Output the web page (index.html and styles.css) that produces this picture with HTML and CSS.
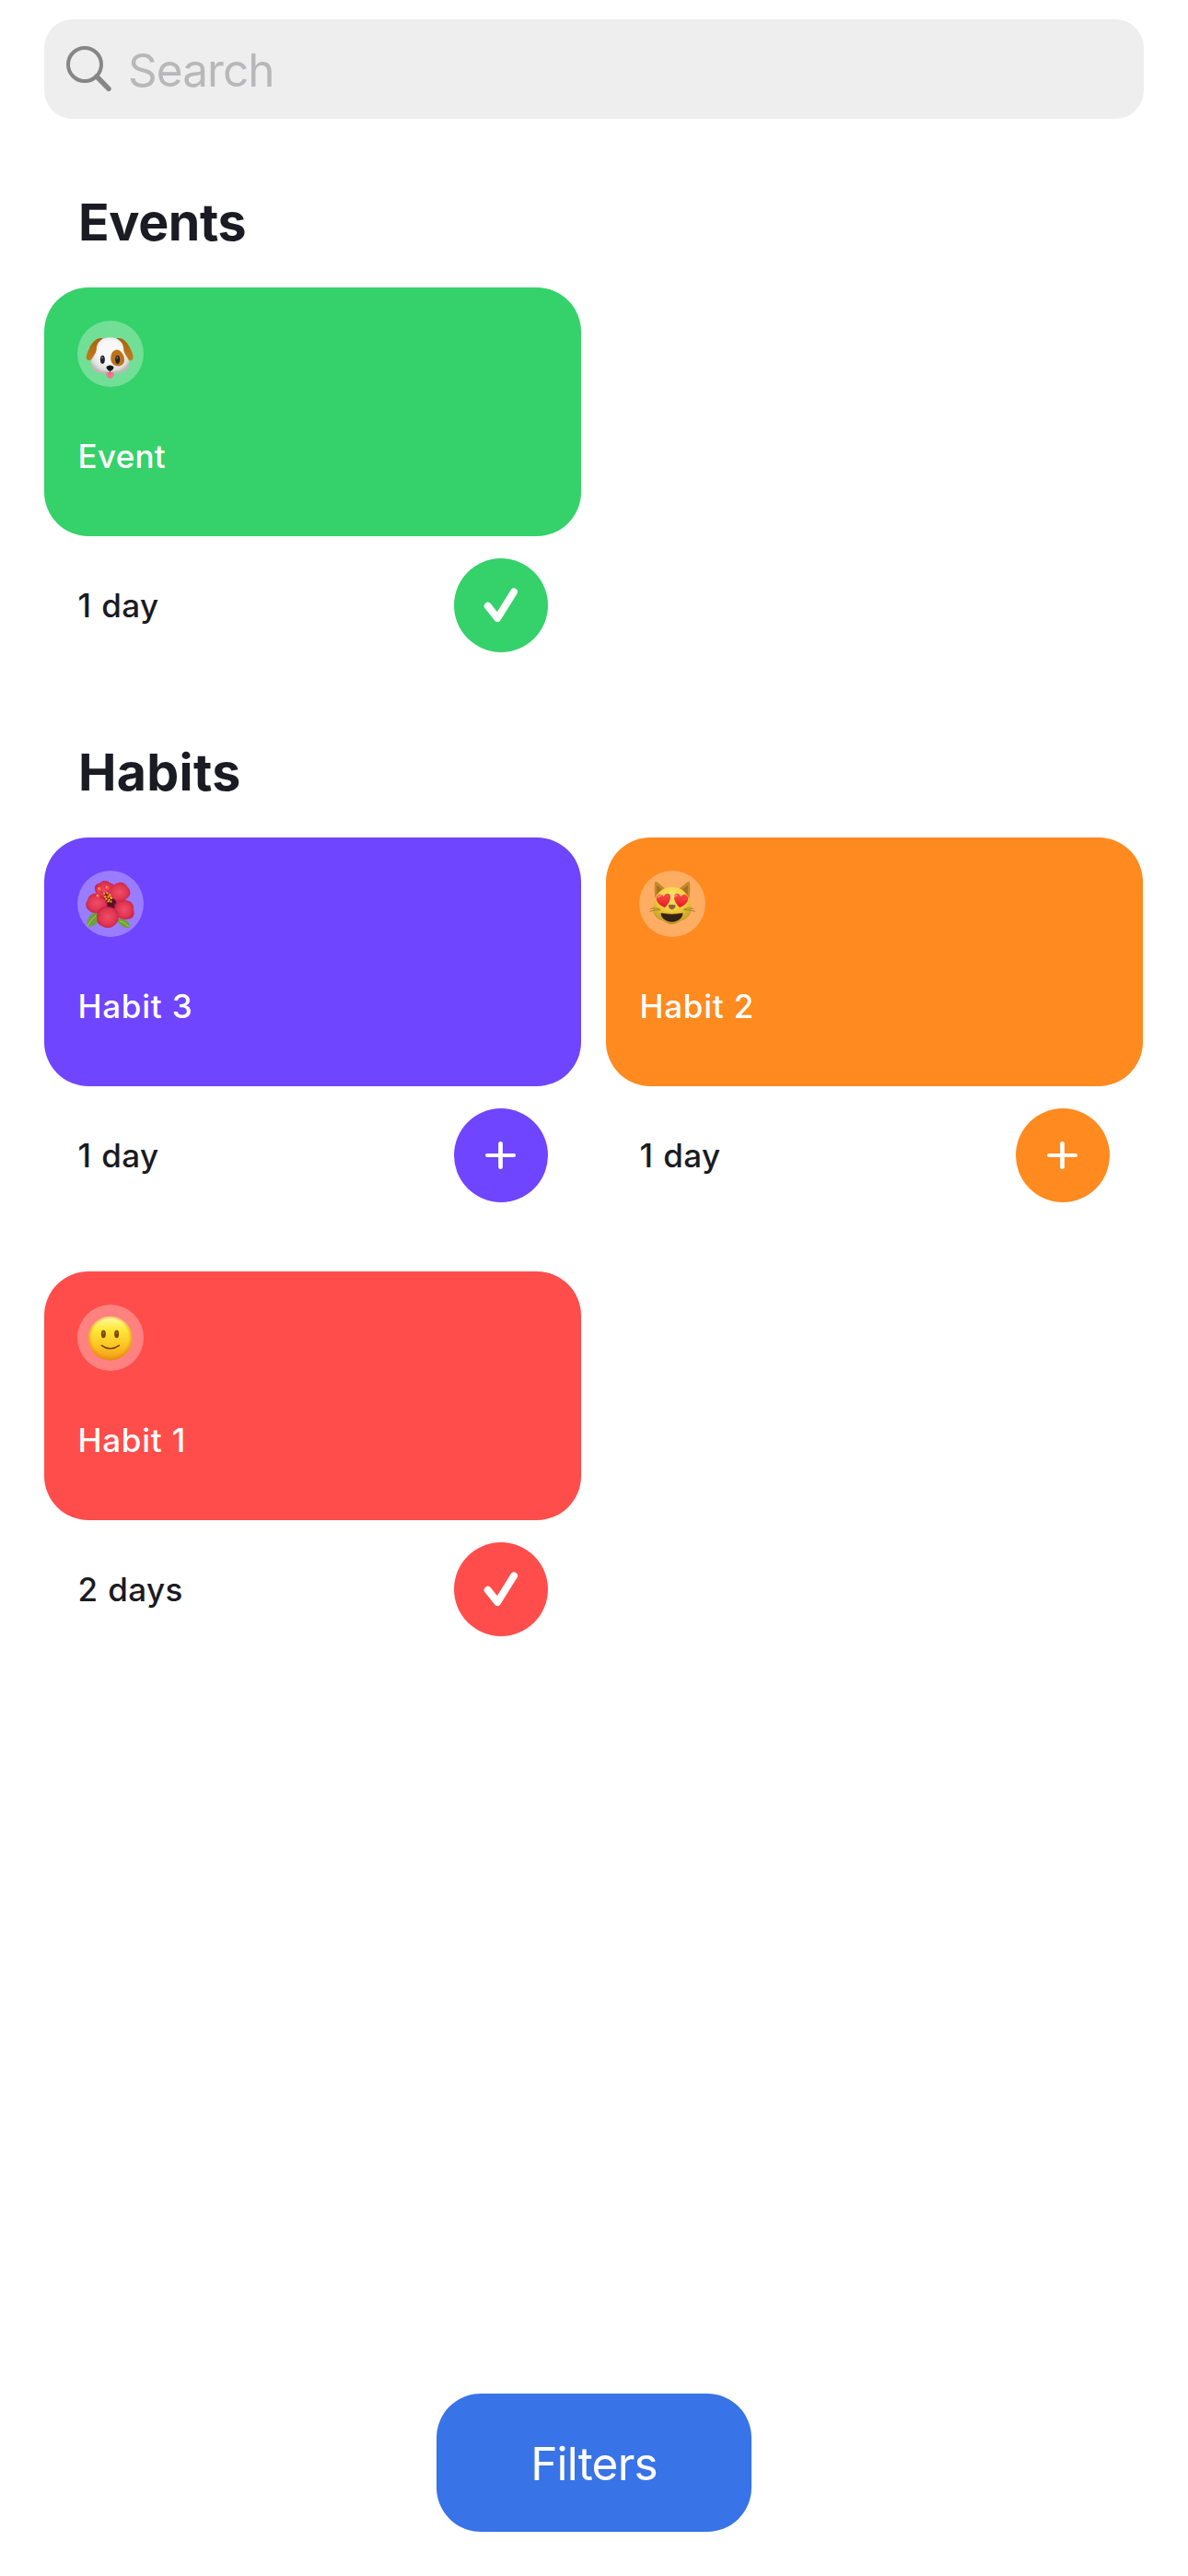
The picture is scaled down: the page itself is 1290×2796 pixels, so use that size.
FILE: index.html
```
<!DOCTYPE html>
<html lang="en">
<head>
<meta charset="utf-8">
<title>Habits</title>
<link rel="stylesheet" href="styles.css">
</head>
<body>
<svg class="defs" width="0" height="0" aria-hidden="true">
  <defs>
    <symbol id="check" viewBox="0 0 102 102"><path d="M36.7 51.8 47.2 65 65 36.5" fill="none" stroke="#fff" stroke-width="8" stroke-linecap="round" stroke-linejoin="round"/></symbol>
    <symbol id="plus" viewBox="0 0 102 102"><path d="M36 51H65" stroke="#fff" stroke-width="4" stroke-linecap="round"/><path d="M50.5 38.300V63.700" stroke="#fff" stroke-width="4.700" stroke-linecap="round"/></symbol>
    <radialGradient id="fur" cx=".5" cy=".4" r=".6"><stop offset=".5" stop-color="#f8f8f8"/><stop offset=".85" stop-color="#dededc"/><stop offset="1" stop-color="#b9bab5"/></radialGradient>
    <linearGradient id="ear" x1="0" y1="0" x2="0" y2="1"><stop offset="0" stop-color="#a9620c"/><stop offset="1" stop-color="#c57a1b"/></linearGradient>
    <radialGradient id="petal" cx=".5" cy=".5" r=".6"><stop offset="0" stop-color="#ef4d69"/><stop offset=".6" stop-color="#e03653"/><stop offset="1" stop-color="#b81c3c"/></radialGradient>
    <radialGradient id="cat" cx=".5" cy=".25" r=".75"><stop offset="0" stop-color="#ffe66a"/><stop offset=".55" stop-color="#efc93a"/><stop offset="1" stop-color="#bd9526"/></radialGradient>
    <linearGradient id="heart" x1="0" y1="0" x2="0" y2="1"><stop offset="0" stop-color="#ff5149"/><stop offset="1" stop-color="#e31a22"/></linearGradient>
    <linearGradient id="smile" x1="0" y1="0" x2="0" y2="1"><stop offset="0" stop-color="#fffaa8"/><stop offset=".3" stop-color="#fee83a"/><stop offset=".65" stop-color="#fdc524"/><stop offset="1" stop-color="#f49a17"/></linearGradient>
    <radialGradient id="rim" cx=".5" cy=".48" r=".52"><stop offset=".8" stop-color="#e58a10" stop-opacity="0"/><stop offset="1" stop-color="#dd8310" stop-opacity=".75"/></radialGradient>
  </defs>
</svg>
<main class="screen">
  <label class="search">
    <svg class="search-icon" viewBox="0 0 52 52"><circle cx="22" cy="22" r="18" fill="none" stroke="#868688" stroke-width="4"/><path d="M35 35 48 48.300" stroke="#868688" stroke-width="5.500" stroke-linecap="round"/></svg>
    <span class="placeholder">Search</span>
  </label>

  <section class="section">
    <h2 class="title title-events">Events</h2>
    <div class="grid">
      <article class="item green">
        <div class="card">
          <svg class="emoji" viewBox="0 0 72 72"><g transform="translate(-14 -13) scale(.33333)">
            <path d="M125 97C104 92 88 112 80 131c-6 14-12 26-7 34 8 11 22-4 29-17z" fill="url(#ear)"/>
            <path d="M170 97c21-5 37 15 45 34 6 14 12 26 7 34-8 11-22-4-29-17z" fill="url(#ear)"/>
            <path d="M148 94c-27 0-44 16-44 40 0 13-18 25-18 46 0 20 17 30 38 30 9 3 39 3 48 0 21 0 39-10 39-30 0-21-18-33-18-46 0-24-18-40-45-40z" fill="url(#fur)"/>
            <path d="M168 134c-13 2-18 17-17 31 1 13 11 22 23 22 13 0 21-8 21-19 0-17-12-36-27-34z" fill="#bd7219"/>
            <ellipse cx="124" cy="166" rx="7.500" ry="14" fill="#222326"/><ellipse cx="173" cy="166" rx="7.500" ry="14" fill="#222326"/>
            <ellipse cx="123" cy="160" rx="2.500" ry="4" fill="#74777b"/><ellipse cx="172" cy="160" rx="2.500" ry="4" fill="#74777b"/>
            <path d="M122 204q15 6 26-6 11 12 27 6" fill="none" stroke="#b5b5b0" stroke-width="2"/>
            <path d="M136 208q12-4 25 0v8q-2 11-12 11t-13-11z" fill="#f4768d"/><path d="M148.500 208v9" stroke="#d94f6b" stroke-width="2"/>
            <path d="M138 189q10-7 21 0c2 7-5 13-10 13s-13-6-11-13zM148 200v8" fill="#17181a" stroke="#17181a" stroke-width="2"/>
          </g></svg>
          <span class="name name-event">Event</span>
        </div>
        <div class="foot"><span class="streak">1 day</span><svg class="action"><use href="#check"/></svg></div>
      </article>
    </div>
  </section>

  <section class="section section-habits">
    <h2 class="title">Habits</h2>
    <div class="grid">
      <article class="item purple">
        <div class="card">
          <svg class="emoji" viewBox="0 0 72 72"><g transform="translate(-14 -15) scale(.33333)">
            <path d="M109 181c-18-2-38 14-36 46 22 0 37-7 38-27z" fill="#6da03b"/><path d="M74 226q15-25 28-34" fill="none" stroke="#a7c76d" stroke-width="3"/>
            <path d="M171 205c17-7 42-1 42 26-16 2-34-4-42-26z" fill="#6da03b"/><path d="M180 209q18 5 29 18" fill="none" stroke="#a7c76d" stroke-width="3"/>
            <path d="M148 152C118 140 96 123 99 97c5-10 13-10 19-14 7-8 23-6 30 2 14 2 19 16 15 30z" fill="url(#petal)"/>
            <path d="M144 140c-2-25 8-53 34-56 16-3 24 9 28 15 10 8 10 24 4 30-15 18-38 18-60 18z" fill="url(#petal)"/>
            <circle cx="150" cy="154" r="20" fill="#5d0f28"/>
            <path d="M163 158c6-15 31-24 49-13 11 6 15 17 13 28 6 14-2 27-13 29-32 10-49-14-49-44z" fill="url(#petal)"/>
            <path d="M140 158C137 128 116 115 95 120c-14 3-18 14-20 22-9 9-5 26 3 31 20 19 48 8 62-15z" fill="url(#petal)"/>
            <path d="M150 164c-29-9-47 11-44 32-3 18 8 28 20 31 12 7 26 5 35-3 14-8 16-22 16-32-2-16-12-26-27-28z" fill="url(#petal)"/>
            <path d="M146 143 113 106M147 143l-8-42M147 143l-37-15" stroke="#a51d35" stroke-width="3"/>
            <g fill="#ff584f" stroke="#cc2432" stroke-width="1.500"><circle cx="114" cy="105" r="7.500"/><circle cx="139" cy="101" r="7.500"/><circle cx="109" cy="128" r="7"/></g>
            <g fill="#ffb09b"><circle cx="112" cy="102" r="2.500"/><circle cx="137" cy="98" r="2.500"/><circle cx="107" cy="125" r="2.500"/></g>
            <path d="M131 118 150 146" stroke="#852018" stroke-width="10"/>
            <path d="M127 120h5m5-2h5m3 6h6m-21 5h6m4 1h5m5 5h6m-22 2h5m4 3h5m-8 5h5m4 1h5m-6-14h5" stroke="#ffd51b" stroke-width="5"/>
          </g></svg>
          <span class="name">Habit 3</span>
        </div>
        <div class="foot"><span class="streak">1 day</span><svg class="action"><use href="#plus"/></svg></div>
      </article>
      <article class="item orange">
        <div class="card">
          <svg class="emoji" viewBox="0 0 72 72"><g transform="translate(-14 -15) scale(.33333)">
            <path d="M93 83q4-4 10 1l29 24-38 28q-4-29-1-53zM207 83q-4-4-10 1l-30 24 39 28q4-29 1-53z" fill="#c18a2a"/>
            <path d="M99 93 121 109 100 128zM201 93l-22 16 21 19z" fill="#a76d22"/>
            <path d="M149 98c-36 0-56 26-60 58-8 26 6 44 29 52 10 6 19 12 31 12s21-6 31-12c23-8 38-26 30-52-4-32-25-58-61-58z" fill="url(#cat)"/>
            <path d="M110 170q-18-5-32-1m32 4q-18-1-34 5m112-8q18-5 32-1m-32 4q18-1 37 5" fill="none" stroke="#8b671f" stroke-width="2"/>
            <path d="M126 165C111 160 98 149 98 136c1-15 18-19 24-6 5-14 21-15 22-1 1 14-9 27-18 36z" fill="url(#heart)"/>
            <path d="M174 165c15-5 28-16 28-29-1-15-18-19-24-6-5-14-21-15-22-1-1 14 9 27 18 36z" fill="url(#heart)"/>
            <path d="M104 132q3-6 9-5m52-1q-5-3-7 4" fill="none" stroke="#ff978c" stroke-width="4" stroke-linecap="round"/>
            <path d="M138 157q11-4 22 0c3 6-6 15-11 15s-14-9-11-15z" fill="#8c6544"/>
            <path d="M113 183q36 7 71 0c2 13-14 29-35 29s-38-16-36-29z" fill="#332016"/><path d="M116 184q33 6 65 0" fill="none" stroke="#7a4c1c" stroke-width="2"/>
          </g></svg>
          <span class="name">Habit 2</span>
        </div>
        <div class="foot"><span class="streak">1 day</span><svg class="action"><use href="#plus"/></svg></div>
      </article>
      <article class="item red">
        <div class="card">
          <svg class="emoji" viewBox="0 0 72 72"><g transform="translate(-14 -16) scale(.33333)">
            <circle cx="149" cy="158" r="71.500" fill="url(#smile)"/><circle cx="149" cy="158" r="71.500" fill="url(#rim)"/>
            <ellipse cx="127" cy="144" rx="7.500" ry="12.500" fill="#7a4507"/><ellipse cx="170" cy="144" rx="7.500" ry="12.500" fill="#7a4507"/>
            <ellipse cx="127" cy="140" rx="3" ry="5" fill="#a56817"/><ellipse cx="170" cy="140" rx="3" ry="5" fill="#a56817"/>
            <path d="M121 181q28 21 57 0" fill="none" stroke="#70400b" stroke-width="4.500" stroke-linecap="round"/>
          </g></svg>
          <span class="name">Habit 1</span>
        </div>
        <div class="foot"><span class="streak">2 days</span><svg class="action"><use href="#check"/></svg></div>
      </article>
    </div>
  </section>

  <button class="filters" type="button">Filters</button>
</main>
</body>
</html>
```
FILE: styles.css
```
* {
  box-sizing: border-box;
}

body {
  margin: 0;
  background: #fff;
  color: #1b1b23;
  font-family: Inter, "Liberation Sans", sans-serif;
}

.defs {
  position: absolute;
}

.screen {
  display: flex;
  flex-direction: column;
  height: 2796px;
  padding: 21px 48px 48px;
}

.search {
  display: flex;
  align-items: center;
  height: 108px;
  padding-left: 22px;
  border-radius: 31px;
  background: #eee;
}

.search-icon {
  width: 52px;
  height: 52px;
  margin-bottom: 2px;
}

.placeholder {
  margin: 2px 0 0 17px;
  color: #b8b8ba;
  font-size: 49.5px;
  line-height: 60px;
  letter-spacing: -0.95px;
}

.section {
  margin-top: 78px;
}

.section-habits {
  margin-top: 96px;
}

.title {
  margin: 0 0 38px;
  padding-left: 37px;
  font-size: 55.5px;
  font-weight: 700;
  line-height: 67px;
  letter-spacing: 0.3px;
}

.title-events {
  letter-spacing: -0.4px;
}

.grid {
  display: grid;
  grid-template-columns: repeat(2, 583px);
  gap: 75px 27px;
}

.green { --tint: #35d16a; }
.purple { --tint: #6f45ff; }
.orange { --tint: #ff8a1f; }
.red { --tint: #ff4d4b; }

.card {
  display: flex;
  flex-direction: column;
  height: 270px;
  padding: 36px;
  border-radius: 48px;
  background: var(--tint);
}

.emoji {
  flex: none;
  width: 72px;
  height: 72px;
  border-radius: 50%;
  background: rgba(255, 255, 255, 0.3);
}

.name {
  margin: 54px 0 0 0.5px;
  color: #fff;
  font-size: 35px;
  font-weight: 500;
  line-height: 42px;
  letter-spacing: 0.7px;
  word-spacing: 0.5px;
}

.name-event {
  letter-spacing: 0.3px;
}

.foot {
  display: flex;
  align-items: center;
  justify-content: space-between;
  margin-top: 24px;
  padding: 0 36px 0 36.5px;
}

.streak {
  font-size: 35px;
  font-weight: 500;
  line-height: 42px;
  letter-spacing: 0.4px;
  word-spacing: 1px;
}

.action {
  width: 102px;
  height: 102px;
  border-radius: 50%;
  background: var(--tint);
}

.filters {
  align-self: center;
  width: 342px;
  height: 150px;
  margin-top: auto;
  padding: 2px 0 0;
  border: 0;
  border-radius: 48px;
  background: #3873e7;
  color: #fff;
  font-family: inherit;
  font-size: 49.5px;
  line-height: 60px;
  letter-spacing: -0.8px;
}
```
